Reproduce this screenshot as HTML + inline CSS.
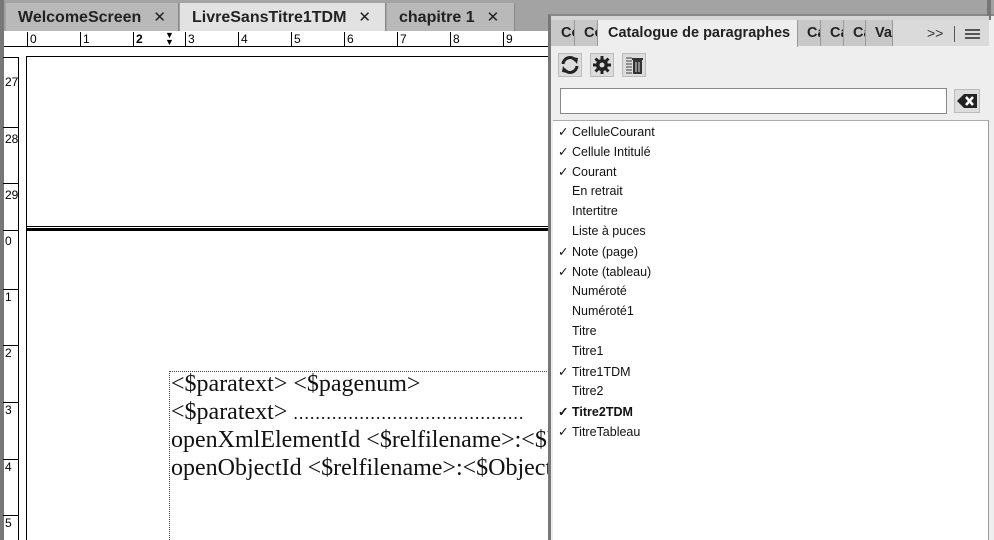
<!DOCTYPE html>
<html style="width:994px;height:540px;overflow:hidden"><head><meta charset="utf-8"><style>
*{margin:0;padding:0;box-sizing:border-box}
body{width:994px;height:540px;overflow:hidden;position:relative;background:#fff;font-family:"Liberation Sans",sans-serif}
.a{position:absolute}
.tab{position:absolute;top:3px;height:28px;font-weight:bold;font-size:16px;color:#222;padding:5px 0 0 12px;border-right:1px solid #888;white-space:nowrap}
.x{font-weight:normal;margin-left:12px;font-size:15px}
.rn{position:absolute;top:32px;font-size:12px;color:#000;border-left:1px solid #000;height:14px;padding-left:2px;line-height:14px}
.vn{position:absolute;left:3px;width:16px;font-size:12px;border-top:1px solid #000;padding-left:2px;line-height:14px}
.doc{position:absolute;left:171px;font-family:"Liberation Serif",serif;font-size:24px;line-height:26px;color:#111;white-space:nowrap}
.li{position:absolute;left:558px;font-size:12.5px;color:#111;white-space:nowrap}
.li span{display:inline-block;width:14px}
.pt{position:absolute;top:20px;height:26px;font-size:14.5px;font-weight:bold;color:#222;padding:5px 0 0 10px;background:#c8c8c8;border-right:1px solid #999;overflow:hidden;white-space:nowrap}
.ib{position:absolute;top:53px;width:24px;height:24px;background:#ddd;border:1px solid #bbb}
</style></head><body>
<div class="a" style="left:0;top:0;width:994px;height:31px;background:#a3a3a3"></div>
<div class="a" style="left:0;top:0;width:4px;height:540px;background:#777"></div>
<div class="tab" style="left:6px;width:173px;background:#b9b9b9">WelcomeScreen<span class="x">✕</span></div>
<div class="tab" style="left:180px;width:206px;background:#e2e2e2;height:29px">LivreSansTitre1TDM<span class="x">✕</span></div>
<div class="tab" style="left:387px;width:128px;background:#b9b9b9">chapitre 1<span class="x">✕</span></div>
<div class="a" style="left:4px;top:31px;width:546px;height:16px;background:#fff;border-bottom:1px solid #000"></div>
<div class="rn" style="left:27px">0</div><div class="rn" style="left:80px">1</div><div class="rn" style="left:133px;font-weight:bold">2</div>
<div class="a" style="left:165px;top:32px;font-size:9px;line-height:7px">▼<br>▼</div>
<div class="rn" style="left:185px">3</div><div class="rn" style="left:238px">4</div><div class="rn" style="left:291px">5</div><div class="rn" style="left:344px">6</div><div class="rn" style="left:397px">7</div><div class="rn" style="left:450px">8</div><div class="rn" style="left:503px">9</div>
<div class="a" style="left:18px;top:57px;width:1px;height:483px;background:#000"></div>
<div class="vn" style="top:57px;height:63px;border-top:1px solid #000;padding-top:17px">27</div>
<div class="vn" style="top:127px;padding-top:4px">28</div>
<div class="vn" style="top:183px;padding-top:4px">29</div>
<div class="vn" style="top:230px;padding-top:3px">0</div>
<div class="vn" style="top:289px;padding-top:0">1</div>
<div class="vn" style="top:345px;padding-top:0">2</div>
<div class="vn" style="top:402px;padding-top:0">3</div>
<div class="vn" style="top:459px;padding-top:0">4</div>
<div class="vn" style="top:515px;padding-top:0">5</div>
<div class="a" style="left:26px;top:56px;width:530px;height:484px;border:1px solid #000;border-bottom:none"></div>
<div class="a" style="left:26px;top:226px;width:530px;height:1px;background:#000"></div>
<div class="a" style="left:26px;top:228px;width:530px;height:3px;background:#000"></div>
<div class="a" style="left:169px;top:371px;width:400px;height:169px;border-top:1px dotted #444;border-left:1px dotted #444"></div>
<div class="doc" style="top:371px">&lt;$paratext&gt; &lt;$pagenum&gt;</div>
<div class="doc" style="top:399px">&lt;$paratext&gt; <span style="letter-spacing:1px;font-size:18px">..........................................</span></div>
<div class="doc" style="top:427px">openXmlElementId &lt;$relfilename&gt;:&lt;$U</div>
<div class="doc" style="top:455px">openObjectId &lt;$relfilename&gt;:&lt;$Object</div>
<div class="a" style="left:548px;top:14px;width:446px;height:526px;background:#eee;border-left:3px solid #777;border-top:2px solid #888"></div>
<div class="a" style="left:987px;top:0;width:4px;height:20px;background:#777"></div>
<div class="a" style="left:551px;top:16px;width:438px;height:4px;background:#d6d6d6"></div>
<div class="a" style="left:551px;top:20px;width:438px;height:26px;background:#dadada"></div>
<div class="pt" style="left:551px;width:24px;padding-left:10px">Co</div>
<div class="pt" style="left:575px;width:23px;padding-left:9px">Co</div>
<div class="pt" style="left:598px;width:200px;background:#eee;height:27px">Catalogue de paragraphes</div>
<div class="pt" style="left:798px;width:23px;padding-left:9px">Ca</div>
<div class="pt" style="left:821px;width:23px;padding-left:9px">Ca</div>
<div class="pt" style="left:844px;width:22px;padding-left:9px">Ca</div>
<div class="pt" style="left:866px;width:27px;padding-left:9px">Va</div>
<div class="a" style="left:927px;top:25px;font-size:14px;color:#333">&gt;&gt;</div>
<div class="a" style="left:954px;top:26px;width:1px;height:16px;background:#555"></div>
<div class="a" style="left:965px;top:29px;width:15px;height:10px;border-top:2px solid #555;border-bottom:2px solid #555"><div style="margin-top:2px;height:2px;background:#555"></div></div>
<div class="ib" style="left:558px"><svg width="22" height="22" viewBox="0 0 22 22"><path d="M4 10a7 7 0 0 1 13-3M18 12a7 7 0 0 1-13 3" stroke="#222" stroke-width="3" fill="none"/><path d="M13 3l6 1-1 6zM9 19l-6-1 1-6z" fill="#222"/></svg></div>
<div class="ib" style="left:590px"><svg width="22" height="22" viewBox="0 0 22 22"><circle cx="11" cy="11" r="6" fill="#222"/><path d="M11 2v18M2 11h18M4.5 4.5l13 13M17.5 4.5l-13 13" stroke="#222" stroke-width="3"/><circle cx="11" cy="11" r="2.5" fill="#ddd"/></svg></div>
<div class="ib" style="left:622px"><svg width="22" height="22" viewBox="0 0 22 22"><path d="M3 4h6M3 7h6M3 10h6M3 13h6M3 16h6M3 19h6" stroke="#444"/><rect x="10" y="6" width="9" height="14" fill="#333"/><rect x="9" y="4" width="11" height="2" fill="#333"/><path d="M13 8v10M16 8v10" stroke="#ddd"/></svg></div>
<div class="a" style="left:560px;top:88px;width:387px;height:26px;background:#fff;border:1px solid #888"></div>
<div class="a" style="left:954px;top:89px;width:26px;height:24px;background:#ddd;border:1px solid #bbb"><svg width="24" height="22" viewBox="0 0 24 22"><path d="M2 11l7-7h13v14H9z" fill="#222"/><path d="M11 7l7 8M18 7l-7 8" stroke="#fff" stroke-width="2.5"/></svg></div>
<div class="a" style="left:553px;top:120px;width:436px;height:420px;background:#fff;border-top:1px solid #aaa;border-right:1px solid #999"></div>
<div class="li" style="top:124px"><span>✓</span>CelluleCourant</div>
<div class="li" style="top:144px"><span>✓</span>Cellule Intitulé</div>
<div class="li" style="top:164px"><span>✓</span>Courant</div>
<div class="li" style="top:184px"><span></span>En retrait</div>
<div class="li" style="top:204px"><span></span>Intertitre</div>
<div class="li" style="top:224px"><span></span>Liste à puces</div>
<div class="li" style="top:244px"><span>✓</span>Note (page)</div>
<div class="li" style="top:264px"><span>✓</span>Note (tableau)</div>
<div class="li" style="top:284px"><span></span>Numéroté</div>
<div class="li" style="top:304px"><span></span>Numéroté1</div>
<div class="li" style="top:324px"><span></span>Titre</div>
<div class="li" style="top:344px"><span></span>Titre1</div>
<div class="li" style="top:364px"><span>✓</span>Titre1TDM</div>
<div class="li" style="top:384px"><span></span>Titre2</div>
<div class="li" style="top:404px;font-weight:bold"><span>✓</span>Titre2TDM</div>
<div class="li" style="top:424px"><span>✓</span>TitreTableau</div>
</body></html>
